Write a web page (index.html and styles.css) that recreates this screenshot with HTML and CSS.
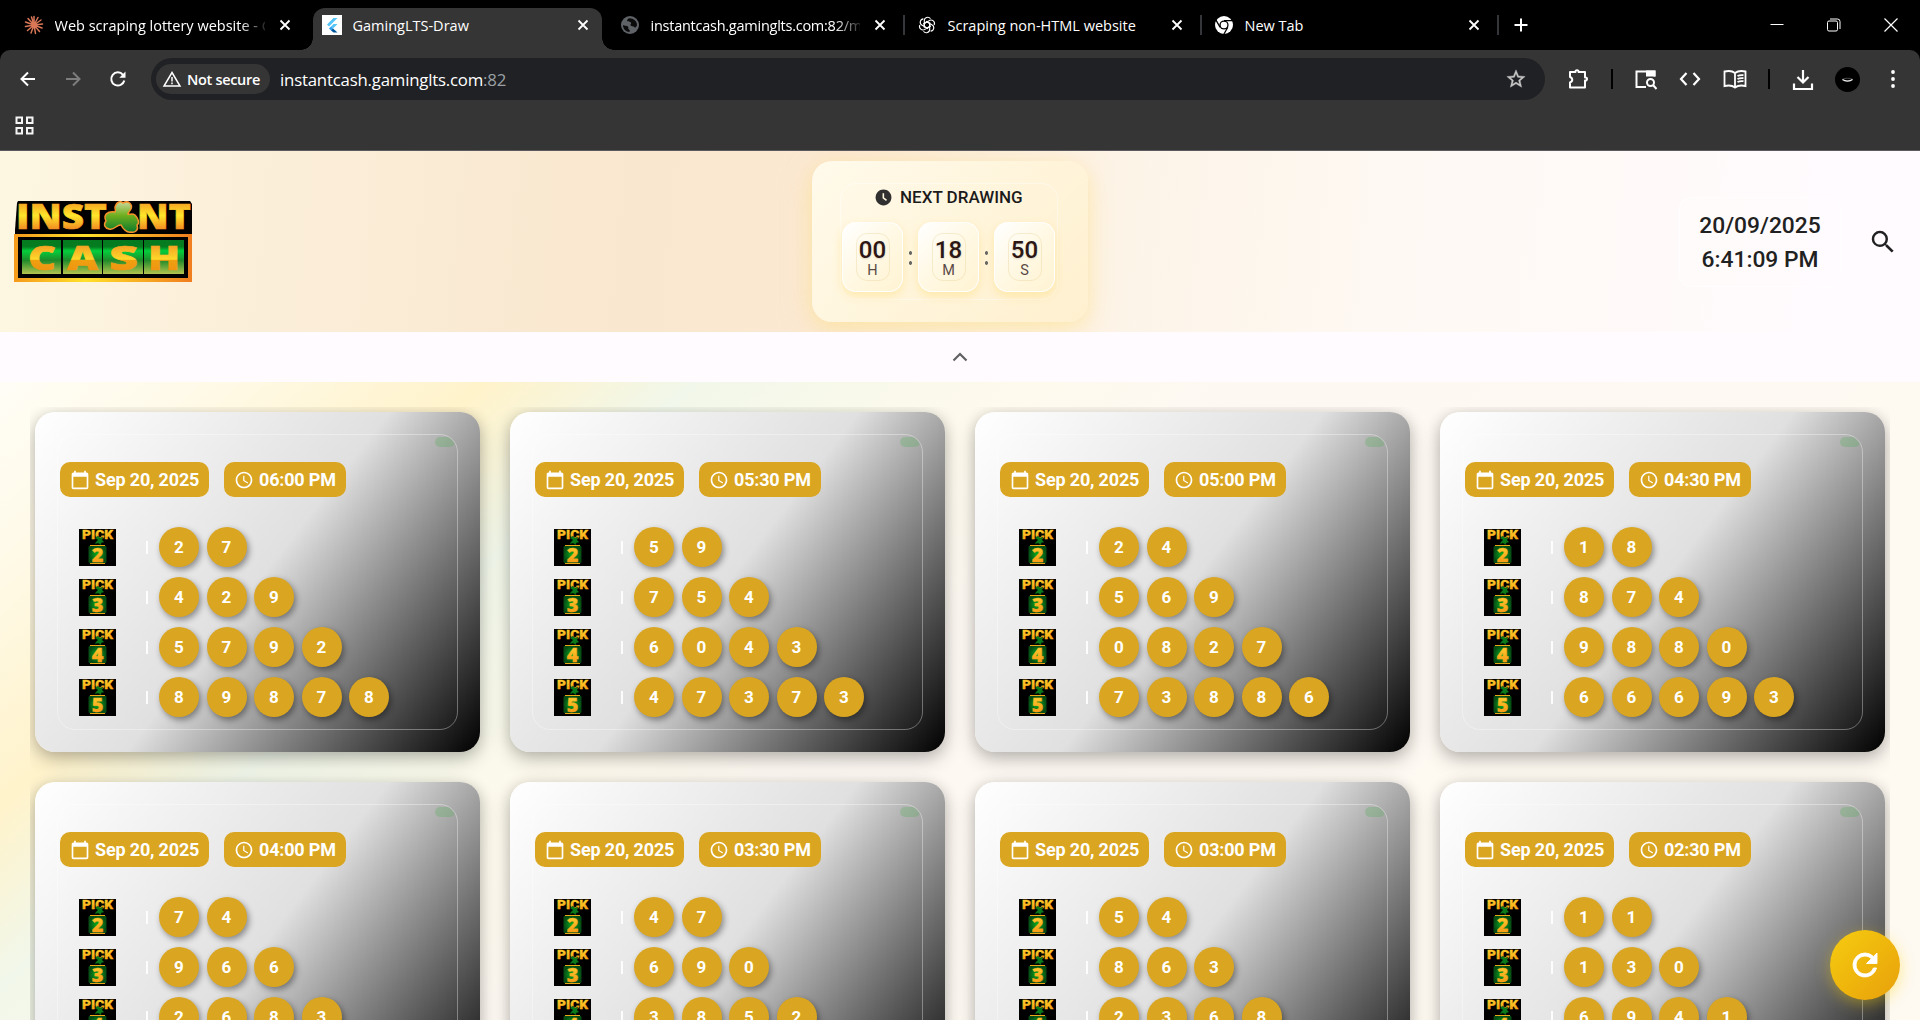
FILE: index.html
```html
<!DOCTYPE html>
<html lang="en">
<head>
<meta charset="utf-8">
<title>GamingLTS-Draw</title>
<link rel="stylesheet" href="styles.css">
</head>
<body>
<svg class="defs" width="0" height="0" aria-hidden="true">
  <defs>
    <linearGradient id="gold" x1="0" y1="0" x2="0" y2="1"><stop offset=".15" stop-color="#f59020"/><stop offset=".5" stop-color="#ffe62a"/><stop offset=".85" stop-color="#f07a20"/></linearGradient>
    <linearGradient id="gold2" x1="0" y1="0" x2="0" y2="1"><stop offset=".1" stop-color="#f08a20"/><stop offset=".54" stop-color="#ffd92a"/><stop offset=".56" stop-color="#f0a010"/><stop offset="1" stop-color="#ef8a14"/></linearGradient>
    <linearGradient id="frame" x1="0" y1="0" x2="1" y2="0"><stop offset="0" stop-color="#f59a1c"/><stop offset=".4" stop-color="#ffe02a"/><stop offset="1" stop-color="#f07d1e"/></linearGradient>
    <linearGradient id="green" x1="0" y1="0" x2="0" y2="1"><stop offset="0" stop-color="#067a20"/><stop offset=".2" stop-color="#057d20"/><stop offset=".32" stop-color="#04cf3c"/><stop offset=".6" stop-color="#1f8a2a"/><stop offset="1" stop-color="#b4c450"/></linearGradient>
    <linearGradient id="leaf" x1="0" y1="0" x2="0" y2="1"><stop offset="0" stop-color="#c9d89a"/><stop offset=".45" stop-color="#6fae1e"/><stop offset="1" stop-color="#0a7a2c"/></linearGradient>
    <radialGradient id="tile"><stop offset="0" stop-color="#0bb01e"/><stop offset="1" stop-color="#064a14"/></radialGradient>
    <linearGradient id="pickgold" x1="0" y1="0" x2="0" y2="1"><stop offset="0" stop-color="#ffe13a"/><stop offset="1" stop-color="#f58a0c"/></linearGradient>
    <symbol id="i-x" viewBox="0 0 12 12"><path d="M1.500 1.500l9 9M10.500 1.500l-9 9" fill="none" stroke="currentColor" stroke-width="1.800"/></symbol>
    <symbol id="i-cal" viewBox="0 0 24 24"><path fill="currentColor" d="M20 3h-1V1h-2v2H7V1H5v2H4c-1.100 0-2 .9-2 2v16c0 1.100.9 2 2 2h16c1.100 0 2-.9 2-2V5c0-1.100-.9-2-2-2zm0 18H4V8h16v13z"/></symbol>
    <symbol id="i-clock" viewBox="0 0 24 24"><path fill="currentColor" d="M12 2C6.500 2 2 6.500 2 12s4.500 10 10 10 10-4.500 10-10S17.500 2 12 2zm0 18c-4.400 0-8-3.600-8-8s3.600-8 8-8 8 3.600 8 8-3.600 8-8 8zm.5-13H11v6l5.200 3.200.8-1.300-4.500-2.700V7z"/></symbol>
  </defs>
</svg>

<header class="chrome">
  <div class="tabs">
    <div class="tab tab-first">
      <svg class="fav" viewBox="0 0 20 20"><g stroke="#d97757" stroke-width="1.500" stroke-linecap="round"><path d="M10 10V1.500M10 10l4-7.500M10 10l7-5M10 10l8.500-1M10 10l8 3M10 10l5.500 6.500M10 10l1.500 8.500M10 10l-3 8M10 10l-6.500 5.500M10 10l-8.500 1.500M10 10L1.500 7M10 10L4 3.500M10 10L7.500 2"/></g></svg>
      <span class="tab-title fade">Web scraping lottery website - C</span>
      <svg class="x"><use href="#i-x"/></svg>
    </div>
    <div class="tab active">
      <svg class="fav" viewBox="0 0 20 20"><path fill="#fff" d="M0 0h20v20H0z"/><path fill="#54c5f8" d="M11.500 3h4L7 11.500l-2-2z"/><path fill="#54c5f8" d="M11.500 9h4L11 13.500l-2-2z"/><path fill="#2a9df4" d="M7 13.500l2-2 2 2-2 2z"/><path fill="#01579b" d="M9 15.500l2-2 4.500 4h-4z"/></svg>
      <span class="tab-title">GamingLTS-Draw</span>
      <svg class="x"><use href="#i-x"/></svg>
    </div>
    <div class="tab t-after">
      <svg class="fav" viewBox="0 0 20 20"><circle cx="10" cy="10" r="9" fill="#5f6368"/><path d="M3 10c1.500 1 4 .5 5 1.500s-.5 2 1 3 .5 2 .5 2.500C6 17 3 14 3 10zM9 3.200c-1.500 1-2.500 2-1.500 3s3 0 3.500 1.500-1.500 2 0 3 3.500.5 4 2c1-.8 2-1.500 2-3 0-3.500-3.500-6.700-8-6.500z" fill="#0b0b0c"/></svg>
      <span class="tab-title tight fade">instantcash.gaminglts.com:82/m</span>
      <svg class="x"><use href="#i-x"/></svg>
    </div>
    <div class="tab sep">
      <svg class="fav" viewBox="0 0 20 20"><g fill="none" stroke="#fff" stroke-width="1.100"><g id="knot"><path d="M7.300 12.800V6a3.400 3.400 0 0 1 6.200-2.200M7.300 8.400l2.800-1.600"/></g><use href="#knot" transform="rotate(60 10 10)"/><use href="#knot" transform="rotate(120 10 10)"/><use href="#knot" transform="rotate(180 10 10)"/><use href="#knot" transform="rotate(240 10 10)"/><use href="#knot" transform="rotate(300 10 10)"/></g></svg>
      <span class="tab-title">Scraping non-HTML website</span>
      <svg class="x"><use href="#i-x"/></svg>
    </div>
    <div class="tab sep">
      <svg class="fav" viewBox="0 0 20 20"><circle cx="10" cy="10" r="9" fill="#fff"/><circle cx="10" cy="10" r="4.600" fill="#000"/><circle cx="10" cy="10" r="3.300" fill="#fff"/><path d="M10 5.600h8.500M6.200 12.300L2 5.200M13.800 12.300L9.700 19.500" stroke="#000" stroke-width="1.300"/></svg>
      <span class="tab-title">New Tab</span>
      <svg class="x"><use href="#i-x"/></svg>
    </div>
    <div class="newtab sep"><svg width="14" height="14" viewBox="0 0 14 14"><path d="M7 .5v13M.5 7h13" stroke="#fff" stroke-width="2"/></svg></div>
    <div class="winbtns">
      <svg width="14" height="14" viewBox="0 0 14 14"><path d="M.5 6.500h13" stroke="#fff"/></svg>
      <svg width="14" height="14" viewBox="0 0 14 14"><g fill="none" stroke="#fff"><rect x=".5" y="3" width="10" height="10" rx="1.500"/><path d="M3 1h7.500a2.500 2.500 0 0 1 2.500 2.500V11"/></g></svg>
      <svg width="14" height="14" viewBox="0 0 14 14"><path d="M.5.5l13 13M13.500.5l-13 13" stroke="#fff" stroke-width="1.200"/></svg>
    </div>
  </div>

  <div class="toolbar">
    <div class="nav">
      <svg width="16" height="16" viewBox="0 0 16 16"><path d="M15 8H2M8 1.500L1.500 8 8 14.500" fill="none" stroke="#fff" stroke-width="2"/></svg>
      <svg width="16" height="16" viewBox="0 0 16 16"><path d="M1 8h13M8 1.500L14.500 8 8 14.500" fill="none" stroke="#7d7d7d" stroke-width="2"/></svg>
      <svg width="16" height="16" viewBox="0 0 16 16"><path d="M14.300 9.500A6.600 6.600 0 1 1 13 3.800" fill="none" stroke="#fff" stroke-width="2"/><path d="M15.500.5v6.200H9.300z" fill="#fff"/></svg>
    </div>
    <div class="omnibox">
      <div class="chip">
        <svg width="18" height="16" viewBox="0 0 18 16"><path d="M9 1.500L17 15H1z" fill="none" stroke="#fff" stroke-width="1.500"/><path d="M9 6v4.500M9 11.500v1.700" stroke="#fff" stroke-width="1.500"/></svg>
        <span>Not secure</span>
      </div>
      <span class="url">instantcash.gaminglts.com<i>:82</i></span>
      <svg class="star" width="22" height="22" viewBox="0 0 24 24"><path fill="#c7c7c7" stroke="#c7c7c7" stroke-width=".4" d="M22 9.240l-7.190-.62L12 2 9.190 8.630 2 9.240l5.460 4.730L5.820 21 12 17.270 18.180 21l-1.630-7.030L22 9.240zM12 15.400l-3.760 2.270 1-4.280-3.320-2.880 4.380-.38L12 6.100l1.710 4.040 4.380.38-3.320 2.880 1 4.280L12 15.400z"/></svg>
    </div>
    <div class="actions">
      <svg width="24" height="24" viewBox="0 0 24 24"><path d="M4 5h5.500c-.6-2.500 3.600-2.500 3 0H19v5.500c2.700-.6 2.700 3.700 0 3V20.500H4v-5c3-1 3-4.500 0-5.500z" fill="none" stroke="#fff" stroke-width="2" stroke-linejoin="round"/></svg>
      <b class="bar"></b>
      <svg width="24" height="24" viewBox="0 0 24 24"><path d="M12 20H2.500V4.500h18v5" fill="none" stroke="#fff" stroke-width="2"/><path d="M12 3.500h9.500v6H12z" fill="#fff"/><circle cx="16.500" cy="15.500" r="3.500" fill="none" stroke="#fff" stroke-width="2"/><path d="M19 18l3.500 4" stroke="#fff" stroke-width="2"/></svg>
      <svg width="24" height="24" viewBox="0 0 24 24"><path d="M8.500 6L3 12l5.500 6M15.500 6L21 12l-5.500 6" fill="none" stroke="#fff" stroke-width="2.200"/></svg>
      <svg width="24" height="24" viewBox="0 0 24 24"><path d="M12 6C9.500 4 4.500 3.800 1.500 4.500V19c3-.7 8-.5 10.500 1.500 2.500-2 7.500-2.200 10.500-1.500V4.500c-3-.7-8-.5-10.500 1.500zM12 6v14M14.500 9c2-1 4-1 6-.8M14.500 12c2-1 4-1 6-.8M14.500 15c2-1 4-1 6-.8" fill="none" stroke="#fff" stroke-width="1.800"/></svg>
      <b class="bar"></b>
      <svg width="24" height="24" viewBox="0 0 24 24"><path d="M12 3v12M6.500 10l5.500 5.500 5.500-5.500M3 16.500V22h18v-5.500" fill="none" stroke="#fff" stroke-width="2.200"/></svg>
      <svg width="25" height="25" viewBox="0 0 25 25"><circle cx="12.500" cy="12.500" r="12.500"/><path d="M7.500 12.300c3-1.500 7-1.500 10 0-2.500 2.200-7.500 2.200-10 0z" fill="none" stroke="#777" stroke-width=".6"/><path d="M7.500 12.600c2.500 1.900 7.500 1.900 10 0" fill="none" stroke="#eee" stroke-width="1.200"/></svg>
      <svg width="24" height="24" viewBox="0 0 24 24"><g fill="#fff"><circle cx="12" cy="5" r="1.900"/><circle cx="12" cy="12" r="1.900"/><circle cx="12" cy="19" r="1.900"/></g></svg>
    </div>
  </div>
  <div class="bookmarks">
    <svg width="19" height="19" viewBox="0 0 19 19"><g fill="none" stroke="#f5f5f5" stroke-width="2"><path d="M1.500 1.500h5.500v5.500H1.500zM12 1.500h5.500v5.500H12zM1.500 12h5.500v5.500H1.500zM12 12h5.500v5.500H12z"/></g></svg>
  </div>
</header>

<main class="page">
  <section class="hero">
    <svg class="logo" width="180" height="84" viewBox="0 0 180 84" role="img" aria-label="Instant Cash">
      <path d="M4 1h172l2 3v30H1V30L3 3z"/>
      <g class="wordmark" font-size="35" fill="url(#gold)" stroke="url(#gold)" stroke-width=".6">
        <text x="2" y="29" textLength="91" lengthAdjust="spacingAndGlyphs">INST</text>
        <text x="123" y="29" textLength="54" lengthAdjust="spacingAndGlyphs">NT</text>
      </g>
      <path d="M107 25c-4-1-7 6-12 4-4-1-6-4-3-8-3-6 1-10 9-9 1-1 0-3 0-5 2-6 6-6 8-4 5-3 10 1 8 6-1 2-3 3-3 5 2 1 4-1 7 1 3 3 5 8 2 10 2 5-2 8-6 7-4 1-8-3-10-7z" fill="url(#leaf)" stroke="#f5902a" stroke-width="1.500"/>
      <rect x="0" y="34" width="178" height="48" fill="url(#frame)"/>
      <rect x="4" y="37" width="170" height="41"/>
      <g fill="url(#green)"><path d="M8 40h39v34H8zM49 40h39v34H49zM89 40h40v34H89zM130 40h40v34h-40z"/></g>
      <g class="wordmark" font-size="33" fill="url(#gold2)" stroke="url(#gold2)" stroke-width=".6">
        <text x="14" y="70" textLength="28" lengthAdjust="spacingAndGlyphs">C</text>
        <text x="53" y="70" textLength="31" lengthAdjust="spacingAndGlyphs">A</text>
        <text x="95" y="70" textLength="29" lengthAdjust="spacingAndGlyphs">S</text>
        <text x="134" y="70" textLength="32" lengthAdjust="spacingAndGlyphs">H</text>
      </g>
    </svg>

    <div class="next">
      <div class="next-inner">
        <h1><svg width="19" height="19" viewBox="0 0 24 24"><path fill="#303030" d="M12 2C6.500 2 2 6.500 2 12s4.500 10 10 10 10-4.500 10-10S17.500 2 12 2z"/><path d="M11.800 6.500v6l4 3" fill="none" stroke="#fff8e2" stroke-width="2"/></svg>NEXT DRAWING</h1>
        <div class="count">
          <div class="unit"><div><strong>00</strong><span>H</span></div></div>
          <em></em>
          <div class="unit"><div><strong>18</strong><span>M</span></div></div>
          <em></em>
          <div class="unit"><div><strong>50</strong><span>S</span></div></div>
        </div>
      </div>
    </div>

    <div class="now">
      <div class="clock">20/09/2025<br>6:41:09 PM</div>
      <svg width="30" height="30" viewBox="0 0 24 24"><path fill="#212121" d="M15.500 14h-.79l-.28-.27A6.470 6.470 0 0 0 16 9.500 6.500 6.500 0 1 0 9.500 16c1.610 0 3.090-.59 4.230-1.570l.27.28v.79l5 4.990L20.490 19l-4.990-5zm-6 0C7.010 14 5 11.990 5 9.500S7.010 5 9.500 5 14 7.010 14 9.500 11.990 14 9.500 14z"/></svg>
    </div>
  </section>

  <div class="collapse"><svg width="16" height="10" viewBox="0 0 16 10"><path d="M1.500 8.500L8 2l6.500 6.500" fill="none" stroke="#616161" stroke-width="2.200"/></svg></div>

  <section class="draws"><div class="grid" id="grid"></div></section>
</main>

<button class="fab" aria-label="Refresh"><svg width="36" height="36" viewBox="0 0 24 24"><path fill="#fff" stroke="#fff" stroke-width=".6" d="M17.650 6.350A7.960 7.960 0 0 0 12 4a8 8 0 1 0 7.730 10h-2.080A6 6 0 1 1 12 6c1.660 0 3.140.69 4.220 1.780L13 11h7V4l-2.350 2.350z"/></svg></button>
<script src="script.js"></script>
</body>
</html>
```
FILE: styles.css
```css
* { box-sizing: border-box; }
body { margin: 0; width: 1920px; height: 1020px; overflow: hidden; font-family: Roboto, "Liberation Sans", sans-serif; background: #fffbff; display: flex; flex-direction: column; }
svg { display: block; flex: none; overflow: visible; }
.defs { position: absolute; }

/* Browser frame */
.chrome { flex: none; height: 151px; background: #000; border-bottom: 1px solid #5b5a5f; color: #fff; font-family: "Open Sans", "Noto Sans", sans-serif; }
.tabs { height: 50px; display: flex; align-items: flex-end; padding-left: 24px; }
.tab { width: 297px; height: 50px; padding-right: 18px; display: flex; align-items: center; font-size: 14.500px; position: relative; }
.tab-first { width: 289px; padding-right: 22px; }
.tab .fav { width: 20px; height: 20px; margin-right: 10.500px; }
.tab-title { flex: 1; white-space: nowrap; overflow: hidden; line-height: 24px; padding-top: 1px; }
.tab-title.tight { letter-spacing: -.25px; }
.fade { -webkit-mask-image: linear-gradient(90deg, #000 88%, transparent 102%); mask-image: linear-gradient(90deg, #000 88%, transparent 102%); }
.tab .x { width: 12px; height: 12px; margin-left: 14px; }
.active { width: 289px; height: 42px; background: #353535; border-radius: 12px 12px 0 0; padding: 0 13px 8px 9px; }
.active::before, .active::after { content: ""; position: absolute; bottom: 0; width: 12px; height: 12px; }
.active::before { left: -12px; background: radial-gradient(circle at 0 0, transparent 11.500px, #353535 12px); }
.active::after { right: -12px; background: radial-gradient(circle at 100% 0, transparent 11.500px, #353535 12px); }
.t-after { width: 302px; padding-left: 18px; }
.sep { padding-left: 13px; }
.sep::before { content: ""; position: absolute; left: -1px; top: 15px; width: 2px; height: 20px; background: #35363a; }
.newtab { position: relative; height: 50px; display: flex; align-items: center; width: 60px; padding-left: 16px; }
.winbtns { margin-left: auto; height: 50px; display: flex; align-items: center; gap: 43px; padding-right: 22px; }

.toolbar { height: 58px; padding-right: 15px; display: flex; align-items: center; background: #353535; border-radius: 10px 10px 0 0; }
.nav { width: 151px; display: flex; gap: 29px; padding-left: 20px; }
.omnibox { width: 1394px; height: 42px; border-radius: 21px; background: #202124; display: flex; align-items: center; padding: 0 18px 0 5px; }
.chip { width: 114px; height: 30px; border-radius: 15px; background: #353535; display: flex; align-items: center; padding-left: 7px; gap: 6px; font-size: 14.500px; font-weight: 600; white-space: nowrap; }
.chip span { letter-spacing: -.32px; }
.url { margin-left: 10px; font-size: 16.800px; letter-spacing: -.2px; flex: 1; white-space: nowrap; }
.url i { font-style: normal; color: #9aa0a6; }
.actions { flex: 1; display: flex; align-items: center; justify-content: space-between; padding-left: 21px; }
.bar { width: 2px; height: 20px; background: #000; }
.bookmarks { height: 42px; background: #353535; display: flex; align-items: center; padding: 0 0 7px 15px; }

/* Header */
.page { flex: 1; min-height: 0; display: flex; flex-direction: column; }
.hero { flex: none; height: 181px; display: flex; align-items: center; justify-content: space-between; position: relative; overflow: hidden;
  background: linear-gradient(96deg, #fdf7e1 0, #fcf0db 200px, #faebd4 440px, #fae7cf 640px, #fbe9d3 850px, #fdf4e8 1130px, #fef9f3 1400px, #fffafa 1700px, #fffbff 1850px); }
.logo { margin: 1px 0 0 14px; }
.wordmark { font-family: "Open Sans", "Liberation Sans", sans-serif; font-weight: 800; }
.next { position: absolute; left: 812px; top: 10px; width: 276px; height: 161px; border-radius: 20px; padding: 22px 28px; background: linear-gradient(135deg, #fffaeb, #fff5dc 50%, #fff0cf); box-shadow: 0 8px 30px rgba(255,224,130,.35), 0 4px 16px rgba(255,224,130,.3); }
.next-inner { width: 218px; height: 117px; border: 1px solid rgba(255,255,255,.4); border-radius: 16px; }
.next h1 { margin: 4px 0 0 33px; font-size: 17px; font-weight: 500; line-height: 19px; color: #1c1b1b; display: flex; gap: 7px; white-space: nowrap; }
.count { display: flex; align-items: center; gap: 5.500px; margin: 15px 0 0 1px; }
.unit { width: 61px; height: 70px; flex: none; border: 1px solid rgba(255,255,255,.9); border-radius: 14px; background: linear-gradient(135deg, #fff, #fff8e3 50%, #fff3d2); box-shadow: 0 4px 10px rgba(255,220,110,.45); display: flex; align-items: center; justify-content: center; }
.unit div { width: 34px; height: 48px; margin-top: -1px; border: 1px solid rgba(225,200,130,.3); border-radius: 11px; display: flex; flex-direction: column; align-items: center; }
.unit strong { font-size: 24px; font-weight: 500; line-height: 24px; margin-top: 4px; color: #2c1714; text-shadow: 0 1px 2px rgba(0,0,0,.15); }
.unit span { font-size: 14.500px; line-height: 18px; color: #5a4a46; }
.count em { width: 4px; height: 14px; margin-top: 1px; flex: none; background: radial-gradient(circle at 1.500px 2px, #666 1.500px, transparent 2px), radial-gradient(circle at 1.500px 12px, #666 1.500px, transparent 2px); }
.now { display: flex; align-items: center; gap: 27px; padding-right: 22px; }
.clock { width: 162px; height: 90px; border-radius: 12px; border: 1px solid rgba(255,255,255,.5); background: rgba(255,255,255,.2); text-align: center; font-size: 22.800px; font-weight: 500; line-height: 34px; padding-top: 11px; color: #212121; }
.collapse { flex: none; height: 50px; background: #fffbff; display: flex; align-items: center; justify-content: center; }

/* Results */
.draws { flex: 1; min-height: 0; padding: 25px 30px 0;
  background: linear-gradient(139deg, #fffdf6 0, #fffae9 130px, #fff3cb 320px, #f1f7ea 455px, #f8f9ea 560px, #fffaee 690px, #fdf8f2 820px, #fef9f1 1300px); }
.grid { height: 100%; overflow: hidden; display: grid; grid-template-columns: repeat(4, 465px); grid-auto-rows: 340px; row-gap: 30px; padding-top: 5px; }
.card { margin: 0 15px; padding: 22px; border-radius: 20px; display: flex; background: linear-gradient(127.700deg, #fff 0, #e0e0e0 50%, #000 100%); box-shadow: 0 8px 20px rgba(0,0,0,.2), 0 2px 14px rgba(0,0,0,.14); }
.card:nth-child(4n+1) { margin-left: 5px; }
.card:nth-child(4n) { margin-right: 5px; }
.panel { flex: 1; border: 1px solid rgba(255,255,255,.35); border-radius: 18px; position: relative; padding: 27px 0 0 2px; overflow: hidden; }
.panel::after { content: ""; position: absolute; top: 2px; right: 2px; width: 20px; height: 10px; border-radius: 5px; background: rgba(76,175,80,.27); }
.badges { display: flex; gap: 15px; }
.badge { height: 35px; border-radius: 10px; background: #daa520; color: #fff; display: flex; align-items: center; gap: 5px; font-size: 18px; font-weight: 700; letter-spacing: -.17px; white-space: nowrap; }
.badge svg { width: 20px; height: 20px; }
.date { width: 149px; padding-left: 10px; }
.time { width: 122px; padding-left: 10px; }
.rows { display: flex; flex-direction: column; gap: 10px; margin-top: 30px; padding-left: 19px; }
.row { display: flex; align-items: center; height: 40px; }
.row b { width: 2px; height: 13px; margin: 0 11px 0 30px; background: rgba(255,255,255,.9); }
.pick-name { font: 900 12px Roboto, sans-serif; }
.pick-digit { font: 800 20px "Open Sans", sans-serif; }
.balls { display: flex; gap: 7.500px; }
.ball { width: 40px; height: 40px; border-radius: 50%; background: #daa520; color: #fff; font-size: 17px; font-weight: 700; line-height: 41px; text-align: center; box-shadow: 2px 3px 6px rgba(0,0,0,.4); }

.fab { position: absolute; left: 1830px; top: 930px; width: 70px; height: 70px; border: 0; border-radius: 50%; padding: 0; display: flex; align-items: center; justify-content: center; background: linear-gradient(135deg, #f5cc12, #efb60c 50%, #e8a00c); box-shadow: 0 4px 15px rgba(255,215,0,.4); }
```
FILE: script.js
```js
const draws = [
  ["06:00 PM", "27", "429", "5792", "89878"],
  ["05:30 PM", "59", "754", "6043", "47373"],
  ["05:00 PM", "24", "569", "0827", "73886"],
  ["04:30 PM", "18", "874", "9880", "66693"],
  ["04:00 PM", "74", "966", "2683"],
  ["03:30 PM", "47", "690", "3852"],
  ["03:00 PM", "54", "863", "2368"],
  ["02:30 PM", "11", "130", "6941"]
];

const pick = n => `<svg width="37" height="37" viewBox="0 0 37 37">
  <rect width="37" height="37"/>
  <text class="pick-name" x="3" y="9.500" textLength="31" lengthAdjust="spacingAndGlyphs" fill="url(#pickgold)" stroke="#ffc61c" stroke-width=".3">PICK</text>
  <path d="M19 11l-3-2 3-2 2 2 3-1-1 3 2 2-3 1 0 2-3-2-3 1 1-2z" fill="#0b7a1c" stroke="#053c0c" stroke-width=".4"/>
  <rect x="9.500" y="16.500" width="18" height="18" rx="2" fill="url(#tile)"/>
  <path d="M11 16.500h15M11 34.500h15" stroke="#e8a818"/>
  <text class="pick-digit" x="18.500" y="32.500" text-anchor="middle" fill="url(#pickgold)" stroke="#f9ab1c" stroke-width=".3">${n}</text>
</svg>`;

document.getElementById("grid").innerHTML = draws.map(([time, ...picks]) => `
<article class="card"><div class="panel">
  <div class="badges">
    <div class="badge date"><svg><use href="#i-cal"/></svg>Sep 20, 2025</div>
    <div class="badge time"><svg><use href="#i-clock"/></svg>${time}</div>
  </div>
  <div class="rows">${picks.map((p, i) => `
    <div class="row">${pick(i + 2)}<b></b><div class="balls">${[...p].map(d => `<span class="ball">${d}</span>`).join("")}</div></div>`).join("")}
  </div>
</div></article>`).join("");
```
